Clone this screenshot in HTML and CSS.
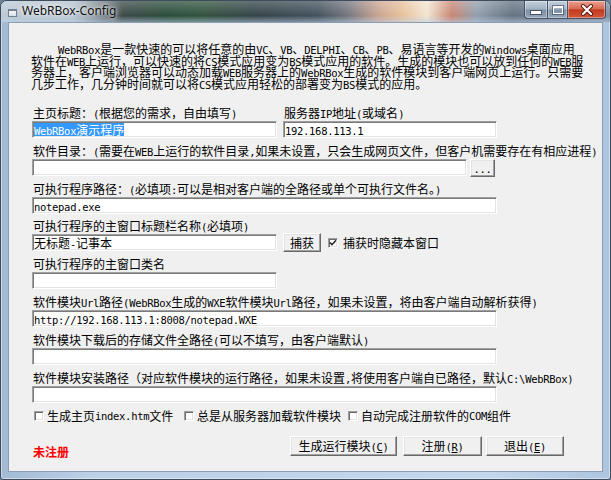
FILE: index.html
```html
<!DOCTYPE html>
<html lang="zh-CN">
<head>
<meta charset="utf-8">
<title>WebRBox-Config</title>
<link rel="stylesheet" href="styles.css">
</head>
<body>
<div class="window">
  <div class="titlebar">
    <span class="app-icon"></span>
    <span class="title">WebRBox-Config</span>
    <div class="caption-btns">
      <span class="cb min"><i class="bar"></i></span>
      <span class="cb max"><i class="box"></i></span>
      <span class="cb close">
        <svg width="14" height="12" viewBox="0 0 14 12">
          <path d="M3 2 L11 10 M11 2 L3 10" stroke="#5a1a10" stroke-width="4" stroke-linecap="round"/>
          <path d="M3 2 L11 10 M11 2 L3 10" stroke="#fff" stroke-width="2.2" stroke-linecap="round"/>
        </svg>
      </span>
    </div>
  </div>
  <div class="client">
    <div class="intro">
      <div class="ln first-ln"><span class="a">WebRBox</span>是一款快速的可以将任意的由<span class="a">VC</span>、<span class="a">VB</span>、<span class="a">DELPHI</span>、<span class="a">CB</span>、<span class="a">PB</span>、易语言等开发的<span class="a">Windows</span>桌面应用</div>
      <div class="ln">软件在<span class="a">WEB</span>上运行，可以快速的将<span class="a">CS</span>模式应用变为<span class="a">BS</span>模式应用的软件。生成的模块也可以放到任何的<span class="a">WEB</span>服</div>
      <div class="ln">务器上，客户端浏览器可以动态加载<span class="a">WEB</span>服务器上的<span class="a">WebRBox</span>生成的软件模块到客户端网页上运行。只需要</div>
      <div class="ln">几步工作，几分钟时间就可以将<span class="a">CS</span>模式应用轻松的部署变为<span class="a">BS</span>模式的应用。</div>
    </div>

    <div class="field first cols">
      <div class="col-l">
        <div class="lbl">主页标题：<span class="a">(</span>根据您的需求，自由填写<span class="a">)</span></div>
        <div class="edit short"><span class="sel"><span class="a">WebRBox</span>演示程序</span></div>
      </div>
      <div class="col-r">
        <div class="lbl">服务器<span class="a">IP</span>地址<span class="a">(</span>或域名<span class="a">)</span></div>
        <div class="edit ip"><span class="a">192.168.113.1</span></div>
      </div>
    </div>

    <div class="field">
      <div class="lbl">软件目录：<span class="a">(</span>需要在<span class="a">WEB</span>上运行的软件目录<span class="a">,</span>如果未设置，只会生成网页文件，但客户机需要存在有相应进程<span class="a">)</span></div>
      <div class="line">
        <div class="edit dir"></div>
        <button class="btn dots" type="button"><span class="a">...</span></button>
      </div>
    </div>

    <div class="field">
      <div class="lbl">可执行程序路径：<span class="a">(</span>必填项<span class="a">:</span>可以是相对客户端的全路径或单个可执行文件名。<span class="a">)</span></div>
      <div class="edit long"><span class="a">notepad.exe</span></div>
    </div>

    <div class="field">
      <div class="lbl">可执行程序的主窗口标题栏名称<span class="a">(</span>必填项<span class="a">)</span></div>
      <div class="line">
        <div class="edit short">无标题<span class="a">-</span>记事本</div>
        <button class="btn grab" type="button">捕获</button>
        <label class="opt inline"><span class="chk checked"><svg width="8" height="8" viewBox="0 0 8 8"><path d="M1 3.5 L3 5.6 L7 1.2" fill="none" stroke="#222" stroke-width="1.4"/></svg></span>捕获时隐藏本窗口</label>
      </div>
    </div>

    <div class="field">
      <div class="lbl">可执行程序的主窗口类名</div>
      <div class="edit short"></div>
    </div>

    <div class="field">
      <div class="lbl">软件模块<span class="a">Url</span>路径<span class="a">(WebRBox</span>生成的<span class="a">WXE</span>软件模块<span class="a">Url</span>路径，如果未设置，将由客户端自动解析获得<span class="a">)</span></div>
      <div class="edit long"><span class="a">http://192.168.113.1:8008/notepad.WXE</span></div>
    </div>

    <div class="field">
      <div class="lbl">软件模块下载后的存储文件全路径<span class="a">(</span>可以不填写，由客户端默认<span class="a">)</span></div>
      <div class="edit long"></div>
    </div>

    <div class="field">
      <div class="lbl">软件模块安装路径（对应软件模块的运行路径，如果未设置<span class="a">,</span>将使用客户端自已路径，默认<span class="a">C:\WebRBox)</span></div>
      <div class="edit long"></div>
    </div>

    <div class="opts">
      <label class="opt o1"><span class="chk"></span>生成主页<span class="a">index.htm</span>文件</label>
      <label class="opt o2"><span class="chk"></span>总是从服务器加载软件模块</label>
      <label class="opt o3"><span class="chk"></span>自动完成注册软件的<span class="a">COM</span>组件</label>
    </div>

    <div class="footer">
      <div class="unreg">未注册</div>
      <div class="btns">
        <button class="btn b-gen" type="button">生成运行模块<span class="a">(<u>C</u>)</span></button>
        <button class="btn b-reg" type="button">注册<span class="a">(<u>R</u>)</span></button>
        <button class="btn b-exit" type="button">退出<span class="a">(<u>E</u>)</span></button>
      </div>
    </div>
  </div>
</div>
</body>
</html>
```
FILE: styles.css
```css
html, body {
  margin: 0;
  padding: 0;
}
body {
  width: 611px;
  height: 480px;
  overflow: hidden;
  font-family: "Noto Sans CJK SC", sans-serif;
  font-size: 12px;
  color: #000;
  background: #6f8196;
}

.a {
  font-family: "DejaVu Sans Mono", monospace;
  font-size: 10.5px;
  letter-spacing: -0.3px;
  line-height: 0;
}

.window {
  box-sizing: border-box;
  width: 611px;
  height: 480px;
  border: 1px solid #3e4c5e;
  border-radius: 7px 7px 3px 3px;
  background: linear-gradient(to right, #a3bad4 0%, #bcd0e7 15%, #c3d6ec 80%, #adc4df 100%);
  box-shadow: inset 0 0 0 1px rgba(255,255,255,0.45);
  display: flex;
  flex-direction: column;
  overflow: hidden;
}

.titlebar {
  height: 21px;
  flex: none;
  display: flex;
  align-items: flex-start;
  background:
    linear-gradient(to bottom, rgba(255,255,255,0.28), rgba(255,255,255,0.05) 70%, rgba(190,210,232,0.55)),
    linear-gradient(to right,
      #b9c7d4 0%, #b3c0cc 12%, #76828a 16%, #33403f 20%,
      #1f4430 27%, #274a34 33%, #2b3a40 42%, #3a4955 52%,
      #6e7078 57%, #c9a08c 62%, #e6bf98 66%, #f1e4cf 70%,
      #c5806c 74%, #8d9aa9 78%, #5d6b7b 84%, #7a8ba0 100%);
}

.app-icon {
  box-sizing: border-box;
  width: 9px;
  height: 8px;
  margin: 8px 0 0 7px;
  border: 1px solid #6f8092;
  border-top-width: 2px;
  background: linear-gradient(#f4f7fa, #d7dfe8);
}

.title {
  margin: 2px 0 0 5px;
  font-family: "Noto Sans", "Open Sans", sans-serif;
  font-size: 12px;
  line-height: 16px;
  color: #111;
  text-shadow: 0 0 6px rgba(255,255,255,0.95), 0 0 3px rgba(255,255,255,0.8);
}

.caption-btns {
  margin-left: auto;
  margin-right: 4px;
  display: flex;
}
.cb {
  box-sizing: border-box;
  height: 18px;
  border: 1px solid #46536a;
  border-top: none;
  display: flex;
  align-items: center;
  justify-content: center;
  box-shadow: inset 0 0 0 1px rgba(255,255,255,0.35);
}
.min, .max {
  background: linear-gradient(#c3cfdc, #a3b2c3 48%, #7f90a4 52%, #93a4b8);
}
.min {
  width: 23px;
  border-right: none;
  border-radius: 0 0 0 4px;
}
.max {
  width: 21px;
}
.close {
  width: 38px;
  border-left: none;
  border-radius: 0 0 4px 0;
  background: linear-gradient(#eba292, #d86c55 45%, #c23b1f 52%, #d1583c);
}
.bar {
  display: block;
  width: 10px;
  height: 3px;
  margin-top: 5px;
  background: #fff;
  border: 1px solid #4b5566;
}
.box {
  display: block;
  box-sizing: border-box;
  width: 10px;
  height: 8px;
  border: 1px solid #fff;
  border-top-width: 2px;
  outline: 1px solid rgba(60,70,90,0.6);
}

.client {
  flex: 1;
  margin: 0 7px 7px;
  background: #f0f0f0;
  border: 1px solid #8a9db3;
  padding: 20px 38px 0 23px;
}

.intro {
  margin: 0 0 0 -1px;
}
.ln {
  height: 11.7px;
  line-height: 11.7px;
  white-space: nowrap;
}
.first-ln {
  padding-left: 27px;
}

.field {
  margin-top: 5.8px;
}
.field.first {
  margin-top: 16.2px;
}
.cols {
  display: flex;
  gap: 6px;
}
.col-l { width: 245px; }
.col-r { width: 214px; }

.lbl {
  height: 14px;
  line-height: 14px;
  padding-left: 1px;
  margin-bottom: 1px;
  white-space: nowrap;
}

.edit {
  box-sizing: border-box;
  height: 17px;
  background: #fff;
  border: 1px solid;
  border-color: #a0a0a0 #ffffff #ffffff #a0a0a0;
  box-shadow: inset 1px 1px 0 #7a7a7a, inset -1px -1px 0 #e3e3e3;
  padding-left: 1px;
  line-height: 15px;
  white-space: nowrap;
  overflow: hidden;
}
.edit.short { width: 245px; }
.edit.ip { width: 214px; }
.edit.long { width: 465px; }
.edit.dir { width: 435px; }

.sel {
  display: inline-block;
  background: #3399ff;
  color: #fff;
  line-height: 13px;
  vertical-align: top;
  margin-top: 1px;
}

.line {
  display: flex;
  align-items: flex-start;
}

.btn {
  box-sizing: border-box;
  margin: 0;
  padding: 0;
  font-family: "Noto Sans CJK SC", sans-serif;
  font-size: 12px;
  color: #000;
  background: #f0f0f0;
  border: 1px solid;
  border-color: #ffffff #696969 #696969 #ffffff;
  box-shadow: inset -1px -1px 0 #a0a0a0, inset 1px 1px 0 #e3e3e3;
  line-height: 16px;
  text-align: center;
  white-space: nowrap;
}
.btn u { text-decoration: underline; text-underline-offset: 1px; }

.dots {
  width: 25px;
  height: 18px;
  margin: 0 0 -1px 3px;
}
.grab {
  width: 38px;
  height: 19px;
  margin: -1px 0 -1px 6px;
}

.chk {
  box-sizing: border-box;
  flex: none;
  width: 10px;
  height: 10px;
  margin-right: 3px;
  background: #fff;
  border: 1px solid;
  border-color: #a0a0a0 #ffffff #ffffff #a0a0a0;
  box-shadow: inset 1px 1px 0 #6a6a6a, inset -1px -1px 0 #e3e3e3;
  display: flex;
  align-items: center;
  justify-content: center;
}
.chk svg { display: block; }
.chk.checked { margin-right: 5px; }

.opt {
  display: flex;
  align-items: center;
  white-space: nowrap;
  line-height: 14px;
}
.opt.inline {
  margin-left: 7px;
  height: 17px;
}

.opts {
  display: flex;
  margin-top: 6.4px;
  height: 14px;
}
.opts .opt {
  box-sizing: border-box;
  padding-left: 2px;
}
.o1 { width: 150px; }
.o2 { width: 164px; }

.footer {
  display: flex;
  align-items: flex-start;
  margin-top: 13px;
}
.unreg {
  margin-top: 9px;
  padding-left: 1px;
  line-height: 14px;
  color: #ff0000;
  font-weight: bold;
}
.btns {
  margin-left: auto;
  display: flex;
}
.btns .btn { height: 20px; }
.b-gen { width: 107px; }
.b-reg { width: 79px; margin-left: 6px; }
.b-exit { width: 78px; margin-left: 4px; }
```
